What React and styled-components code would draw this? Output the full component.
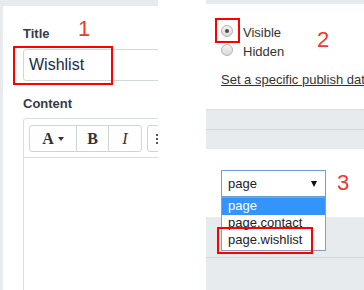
import React from "react";
import styled, { createGlobalStyle } from "styled-components";

const GlobalStyle = createGlobalStyle`
  html, body {
    margin: 0;
    padding: 0;
    background: #fff;
  }
  body {
    font-family: "Liberation Sans", Arial, sans-serif;
    font-size: 13px;
    color: #333;
  }
  * { box-sizing: border-box; }
`;

const Page = styled.div`
  display: flex;
  width: 364px;
  height: 290px;
  overflow: hidden;
  background: #fff;
`;

const LeftPane = styled.div`
  width: 158px;
  flex-shrink: 0;
  display: flex;
  padding: 6px 0 0 3px;
  background: #e8ebee;
`;

const Card = styled.div`
  position: relative;
  flex: 1;
  display: flex;
  flex-direction: column;
  padding: 19px 0 0 20px;
  background: #fff;
  overflow: hidden;
`;

const Label = styled.div`
  font-weight: bold;
  font-size: 13px;
  line-height: 18px;
  color: #333b47;
  margin-top: ${(p) => p.mt || 0}px;
`;

const TextInput = styled.div`
  width: 200px;
  height: 32px;
  margin-top: 6px;
  padding-left: 5px;
  display: flex;
  align-items: center;
  border: 1px solid #d2d7dc;
  border-radius: 3px;
  font-size: 16px;
  color: #222a44;
  flex-shrink: 0;
`;

const Editor = styled.div`
  width: 220px;
  height: 200px;
  margin-top: 5px;
  border: 1px solid #dadee2;
  border-radius: 3px 3px 0 0;
  flex-shrink: 0;
`;

const Toolbar = styled.div`
  display: flex;
  gap: 5px;
  padding: 6px 0 5px 5px;
  border-bottom: 1px solid #dadee2;
`;

const Group = styled.div`
  display: flex;
  height: 27px;
  border: 1px solid #cfd4d9;
  border-radius: 3px;
`;

const ToolButton = styled.div`
  width: ${(p) => p.w}px;
  display: flex;
  align-items: center;
  justify-content: ${(p) => (p.left ? "flex-start" : "center")};
  padding-left: ${(p) => (p.left ? 8 : 0)}px;
  gap: 4px;
  font-family: "Liberation Serif", "Times New Roman", serif;
  font-size: 16px;
  font-weight: ${(p) => (p.italic ? "normal" : "bold")};
  font-style: ${(p) => (p.italic ? "italic" : "normal")};
  color: #333;
  & + & {
    border-left: 1px solid #cfd4d9;
  }
`;

const Caret = styled.span`
  width: 0;
  height: 0;
  border-left: 3px solid transparent;
  border-right: 3px solid transparent;
  border-top: 4px solid #333;
`;

const Spacer = styled.div`
  width: 48px;
  flex-shrink: 0;
  background: #fff;
`;

const RightPane = styled.div`
  position: relative;
  width: 158px;
  flex-shrink: 0;
  display: flex;
  flex-direction: column;
`;

const GrayBand = styled.div`
  height: ${(p) => p.h}px;
  flex-shrink: 0;
  background: #e8ebee;
  border-bottom: ${(p) => (p.line ? "1px solid #d4d8db" : "none")};
  box-shadow: ${(p) => (p.shade ? "inset 0 2px 2px -1px rgba(0,0,0,0.06)" : "none")};
`;

const WhiteSection = styled.div`
  position: relative;
  height: ${(p) => p.h}px;
  flex-shrink: 0;
  padding: ${(p) => p.pt}px 0 0 15px;
  background: #fff;
`;

const RadioRow = styled.div`
  display: flex;
  align-items: flex-start;
  height: 19px;
  line-height: 18px;
  gap: 10px;
  color: #333;
  white-space: nowrap;
`;

const Radio = styled.span`
  position: relative;
  width: 12px;
  height: 12px;
  margin-top: 1px;
  border-radius: 50%;
  border: 1px solid #b4b4b4;
  background: linear-gradient(#f4f4f4, #d9d9d9);
  flex-shrink: 0;
  &::after {
    content: "";
    display: ${(p) => (p.checked ? "block" : "none")};
    position: absolute;
    left: 3px;
    top: 3px;
    width: 4px;
    height: 4px;
    border-radius: 50%;
    background: #4a4a4a;
  }
`;

const PublishLink = styled.a`
  display: block;
  margin-top: 9px;
  line-height: 18px;
  color: #333;
  text-decoration: underline;
  white-space: nowrap;
`;

const SelectBox = styled.div`
  width: 105px;
  height: 27px;
  display: flex;
  align-items: center;
  justify-content: space-between;
  padding: 0 8px 0 6px;
  border: 1px solid #6aa1d4;
  color: #222;
`;

const Arrow = styled.span`
  width: 0;
  height: 0;
  border-left: 3px solid transparent;
  border-right: 3px solid transparent;
  border-top: 6px solid #111;
`;

const OptionList = styled.div`
  position: absolute;
  left: 15px;
  top: 48px;
  width: 105px;
  border: 1px solid #8a9fbd;
  background: #fff;
  z-index: 2;
`;

const Option = styled.div`
  height: ${(p) => (p.last ? 18 : 17)}px;
  line-height: 16px;
  padding-left: 6px;
  color: ${(p) => (p.active ? "#fff" : "#222")};
  background: ${(p) => (p.active ? "#3395fb" : "#fff")};
`;

const Mark = styled.div`
  position: absolute;
  left: ${(p) => p.x}px;
  top: ${(p) => p.y}px;
  width: ${(p) => p.w}px;
  height: ${(p) => p.h}px;
  border: 2px solid #f00;
  z-index: 3;
  pointer-events: none;
`;

const Num = styled.div`
  position: absolute;
  left: ${(p) => p.x}px;
  top: ${(p) => p.y}px;
  font-size: 22px;
  line-height: 22px;
  color: #f0392c;
`;

export default function App() {
  return (
    <>
      <GlobalStyle />
      <Page>
        <LeftPane>
          <Card>
            <Label>Title</Label>
            <TextInput>Wishlist</TextInput>
            <Label mt={14}>Content</Label>
            <Editor>
              <Toolbar>
                <Group>
                  <ToolButton w={46}>
                    A<Caret />
                  </ToolButton>
                  <ToolButton w={32}>B</ToolButton>
                  <ToolButton w={33} italic>
                    I
                  </ToolButton>
                </Group>
                <Group>
                  <ToolButton w={40} left>
                    <svg width="2" height="12" viewBox="0 0 2 12">
                      <rect x="0" y="1" width="2" height="2" fill="#555" />
                      <rect x="0" y="5" width="2" height="2" fill="#555" />
                      <rect x="0" y="9" width="2" height="2" fill="#555" />
                    </svg>
                  </ToolButton>
                </Group>
              </Toolbar>
            </Editor>
            <Num x={75} y={12}>1</Num>
            <Mark x={10} y={40} w={100} h={39} />
          </Card>
        </LeftPane>
        <Spacer />
        <RightPane>
          <GrayBand h={4} />
          <WhiteSection h={105} pt={20}>
            <RadioRow>
              <Radio checked />
              Visible
            </RadioRow>
            <RadioRow>
              <Radio />
              Hidden
            </RadioRow>
            <PublishLink>Set a specific publish date</PublishLink>
            <Mark x={9} y={14} w={25} h={25} />
            <Num x={111} y={25}>2</Num>
          </WhiteSection>
          <GrayBand h={21} line shade />
          <GrayBand h={19} />
          <WhiteSection h={68} pt={21}>
            <SelectBox>
              page
              <Arrow />
            </SelectBox>
            <OptionList>
              <Option active>page</Option>
              <Option>page.contact</Option>
              <Option last>page.wishlist</Option>
            </OptionList>
            <Mark x={11} y={78} w={96} h={27} />
            <Num x={131} y={23}>3</Num>
          </WhiteSection>
          <GrayBand h={41} line />
          <GrayBand h={40} />
        </RightPane>
      </Page>
    </>
  );
}
